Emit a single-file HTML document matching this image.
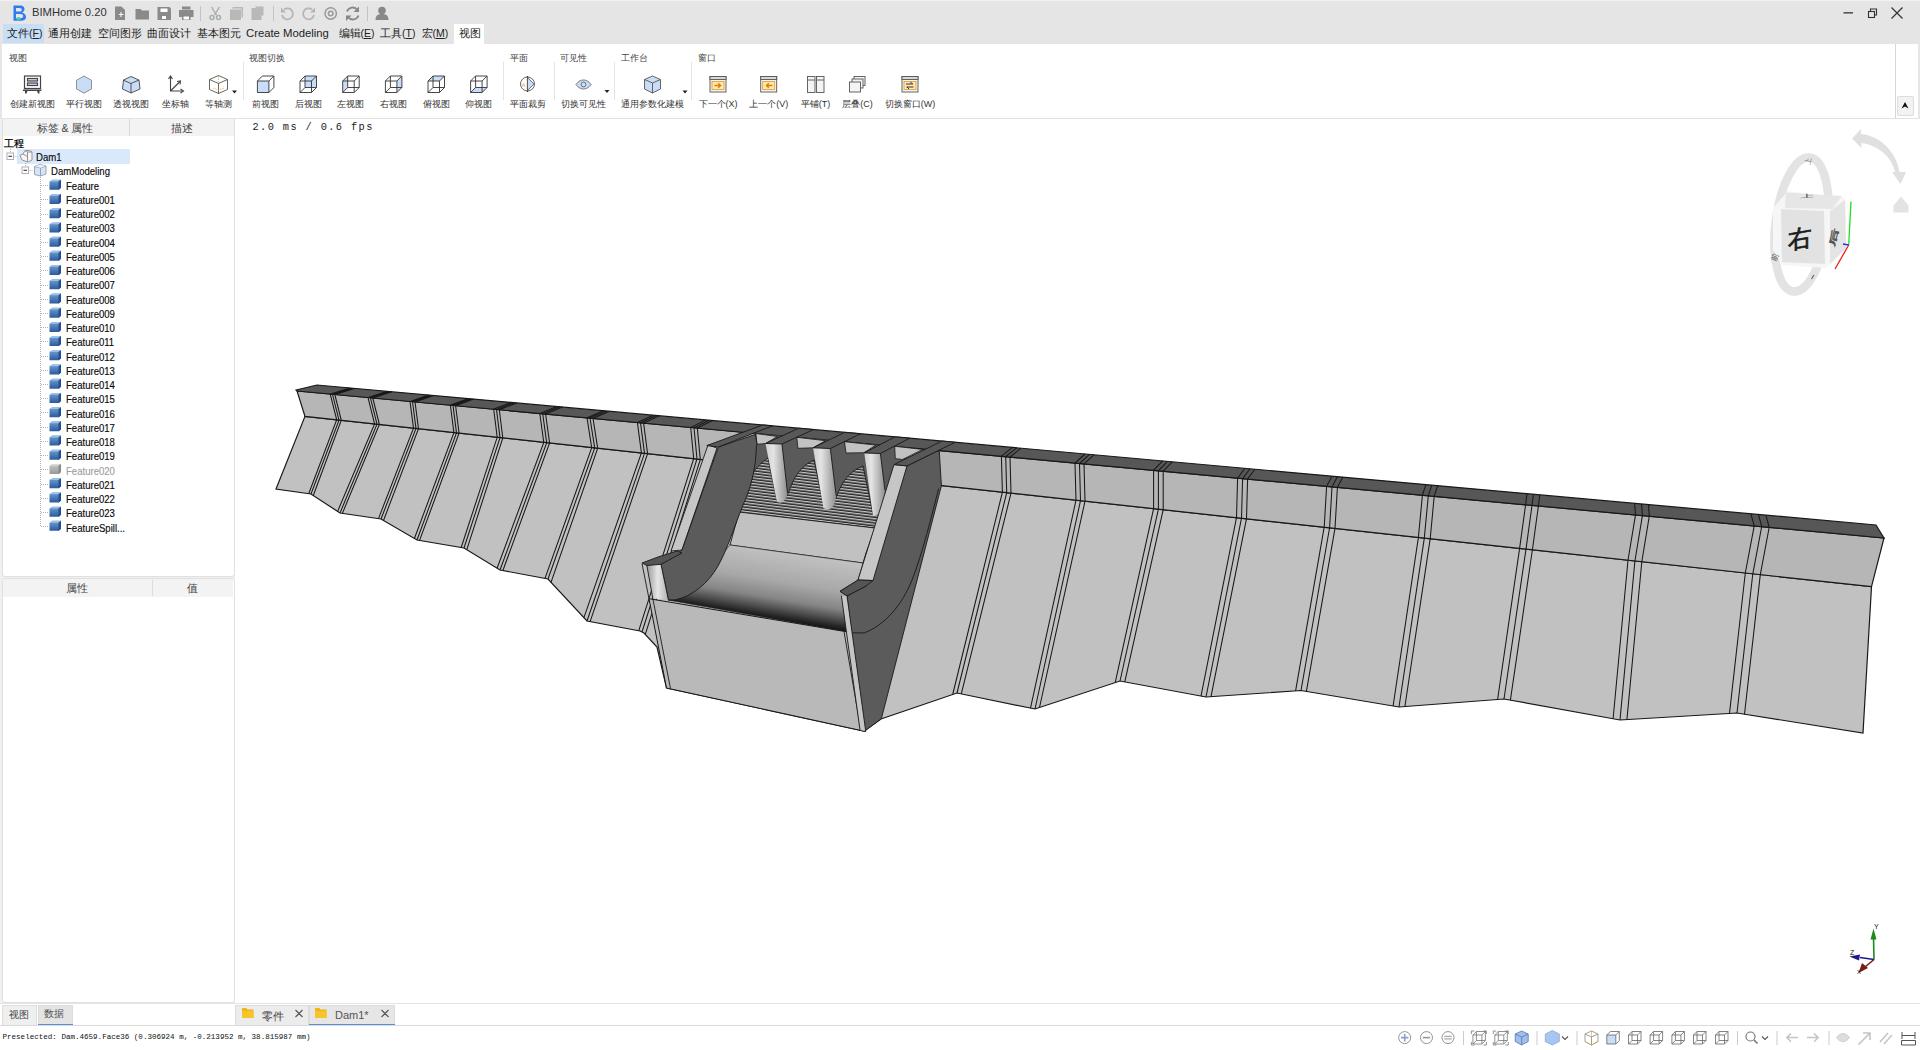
<!DOCTYPE html>
<html><head><meta charset="utf-8">
<style>
*{box-sizing:border-box;margin:0;padding:0}
html,body{width:1920px;height:1050px;overflow:hidden;background:#e6e6e6;font-family:"Liberation Sans",sans-serif;color:#222}
.a{position:absolute}
.t{position:absolute;white-space:nowrap;line-height:1}
#title{left:0;top:0;width:1920px;height:44px;background:#e5e5e5}
.menu{font-size:10.5px;top:28px;color:#222}
#ribbon{left:2px;top:44px;width:1916px;height:75px;background:#fff;border-bottom:1px solid #e2e2e2}
.gl{font-size:9px;color:#444;top:54px}
.bl{font-size:9px;color:#333;top:99.7px;transform:translateX(-50%)}
.sep{position:absolute;width:1px;background:#e4e4e4;top:62px;height:38px}
#left{left:0;top:119px;width:235px;height:885px;background:#f0f0f0}
.tree{font-size:9.5px;color:#0a0a0a;-webkit-text-stroke:0.15px currentColor}
.ft{font-size:10.4px;transform:scaleX(0.92);transform-origin:0 0}
.hdr{background:#f3f3f3;color:#444;font-size:10.5px}
#view{left:235px;top:119px;width:1685px;height:885px;background:#fff}
#bot{left:0;top:1003px;width:1920px;height:22px;background:#fff}
#status{left:0;top:1025px;width:1920px;height:25px;background:#fff;border-top:1px solid #dadada}
</style></head><body>
<div id="title" class="a">
<div class="a" style="left:0;top:0;width:1920px;height:1px;background:#f2f2f2"></div>
<svg class="a" style="left:11px;top:4px" width="17" height="18" viewBox="0 0 17 18"><path d="M2.5 1.5 H9 C12.5 1.5 13.5 3.5 13.5 5 C13.5 7 12.3 8 11 8.6 C13.5 9.2 15 11 15 13 C15 15.5 13 16.8 10 16.8 H2.5 Z M5 4 V7.6 H8.6 C10 7.6 10.8 6.8 10.8 5.8 C10.8 4.8 10 4 8.6 4 Z M5 10 V14.3 H9.5 C11.2 14.3 12.2 13.4 12.2 12.1 C12.2 10.8 11.2 10 9.5 10 Z" fill="#2f7cf0"/><ellipse cx="7.5" cy="14.5" rx="2.2" ry="1.6" fill="#3dd4b8"/></svg>
<div class="t" style="left:32px;top:7px;font-size:11.2px;color:#333">BIMHome 0.20</div>
<svg class="a" style="left:112px;top:5px" width="280" height="16" viewBox="0 0 280 16">
<g fill="#8a8a8a">
<path d="M3 1.5h6.5l3.5 3.5v10h-10z"/>
<path d="M23.5 4h5l1.5 1.5h7v9h-13.5z"/>
<path d="M45.5 2h12l1.5 1.5v11.5h-13.5z"/>
<path d="M67 5h14.5v7h-14.5z M70 1.5h8.5v3h-8.5z M70 10.5h8.5v4.5h-8.5z"/>
</g>
<g fill="#fff"><path d="M7.5 9h1v-2h1v2h2v1h-2v2h-1v-2h-2z"/><rect x="48.5" y="3.5" width="7" height="3.5"/><rect x="50" y="11" width="4" height="3"/><rect x="71.5" y="11.5" width="5.5" height="3"/></g>
<rect x="88" y="1" width="1" height="15" fill="#c4c4c4"/>
<g fill="none" stroke="#aaa" stroke-width="1.4"><path d="M99.5 2l5 8 M107.5 2l-5 8"/><circle cx="100" cy="12.5" r="2"/><circle cx="106.5" cy="12.5" r="2"/></g>
<g fill="#b8b8b8"><path d="M118 4.5h11v10.5h-11z M120.5 2h10.5v10.5h-1.5v-9h-9z"/><path d="M139.5 3h10v12h-10z M143 1.5h8.5v9h-1.5"/></g>
<rect x="161" y="1" width="1" height="15" fill="#c4c4c4"/>
<g id="undo"><path d="M172 4.5 A5.5 5.5 0 1 1 170 10" fill="none" stroke="#b5b5b5" stroke-width="1.8"/><path d="M169 2.5v5h5z" fill="#b5b5b5"/></g><use href="#undo" transform="matrix(-1 0 0 1 372 0)"/>
<circle cx="218.7" cy="8.5" r="5.7" fill="none" stroke="#999" stroke-width="1.5"/><circle cx="218.7" cy="8.5" r="2.3" fill="none" stroke="#999" stroke-width="1.5"/>
<g fill="none" stroke="#888" stroke-width="1.8"><path d="M235 6.5 A6 6 0 0 1 245.5 5"/><path d="M246.5 10.5 A6 6 0 0 1 236 12"/></g>
<path d="M247 1.5v5.5h-5.5z M234 16v-5.5h5.5z" fill="#888"/>
<rect x="255" y="1" width="1" height="15" fill="#c4c4c4"/>
<g fill="#888"><circle cx="270" cy="5.5" r="3.8"/><path d="M263.5 15c0-4.5 2.5-6 6.5-6s6.5 1.5 6.5 6z"/></g>
</svg>
<svg class="a" style="left:1840px;top:6px" width="66" height="14" viewBox="0 0 66 14">
<rect x="3.5" y="6.2" width="9.5" height="1.3" fill="#333"/>
<g fill="none" stroke="#333" stroke-width="1.1"><rect x="28.5" y="5.5" width="6" height="6"/><path d="M30.5 5.5v-2.5h6v6h-2"/></g>
<path d="M51.5 1.5l11 11 M62.5 1.5l-11 11" stroke="#333" stroke-width="1.2"/>
</svg>
<div class="a" style="left:3px;top:24px;width:41px;height:19px;background:#c7def5"></div>
<div class="a" style="left:454px;top:24px;width:30px;height:20px;background:#fff"></div>
<div class="t menu" style="left:7px">文件(<u>F</u>)</div>
<div class="t menu" style="left:48px">通用创建</div>
<div class="t menu" style="left:97.5px">空间图形</div>
<div class="t menu" style="left:147px">曲面设计</div>
<div class="t menu" style="left:196.5px">基本图元</div>
<div class="t menu" style="left:246px;font-size:11.3px;top:27.5px">Create Modeling</div>
<div class="t menu" style="left:338.5px">编辑(<u>E</u>)</div>
<div class="t menu" style="left:380px">工具(<u>T</u>)</div>
<div class="t menu" style="left:421.5px">宏(<u>M</u>)</div>
<div class="t menu" style="left:458.5px">视图</div>
</div>
<div id="ribbon" class="a"></div>
<div class="a" style="left:1895px;top:44px;width:1px;height:74px;background:#d6d6d6"></div>
<div class="a" style="left:1897px;top:96px;width:17px;height:20px;background:#f2f2f2;border:1px solid #ddd;border-radius:2px"></div>
<svg class="a" style="left:1900px;top:101px" width="10" height="9"><path d="M1.5 7.5L5 1l3.5 6.5L5 5.5z" fill="#111"/></svg>
<div class="t gl" style="left:9px">视图</div>
<div class="t gl" style="left:249px">视图切换</div>
<div class="t gl" style="left:509.5px">平面</div>
<div class="t gl" style="left:560px">可见性</div>
<div class="t gl" style="left:620.5px">工作台</div>
<div class="t gl" style="left:698px">窗口</div>
<div class="sep" style="left:242.5px"></div>
<div class="sep" style="left:503px"></div>
<div class="sep" style="left:553.5px"></div>
<div class="sep" style="left:613.5px"></div>
<div class="sep" style="left:691px"></div>
<div class="t bl" style="left:32.2px">创建新视图</div>
<div class="t bl" style="left:84px">平行视图</div>
<div class="t bl" style="left:131.2px">透视视图</div>
<div class="t bl" style="left:175.8px">坐标轴</div>
<div class="t bl" style="left:218.4px">等轴测</div>
<div class="t bl" style="left:265.4px">前视图</div>
<div class="t bl" style="left:308px">后视图</div>
<div class="t bl" style="left:350.7px">左视图</div>
<div class="t bl" style="left:393.4px">右视图</div>
<div class="t bl" style="left:436px">俯视图</div>
<div class="t bl" style="left:478.6px">仰视图</div>
<div class="t bl" style="left:527.7px">平面裁剪</div>
<div class="t bl" style="left:583.7px">切换可见性</div>
<div class="t bl" style="left:652px">通用参数化建模</div>
<div class="t bl" style="left:718px">下一个(X)</div>
<div class="t bl" style="left:768.7px">上一个(V)</div>
<div class="t bl" style="left:815.6px">平铺(T)</div>
<div class="t bl" style="left:857.5px">层叠(C)</div>
<div class="t bl" style="left:910px">切换窗口(W)</div>
<svg class="a" style="left:0;top:70px" width="960" height="28" viewBox="0 70 960 28"><g fill="none" stroke="#444" stroke-width="1.2"><rect x="24.5" y="76" width="16" height="12.5"/><rect x="27.5" y="78.5" width="10" height="2.5" fill="#c9dcf8"/><rect x="27.5" y="83" width="10" height="2.5" fill="#c9dcf8"/></g><path d="M23 89.5h18.5v1.5h-18.5z M25 91h2.5l-1 2.5h-1.5z M37 91h2.5l0 2.5h-1.5z" fill="#444"/><path d="M84 76l7.5 4.3v8.6L84 93.2l-7.5-4.3v-8.6z" fill="#c9dcf8" stroke="#777" stroke-width="0.8"/><path d="M131 76.5l8 3.5l1 9l-9 4l-8.5-4l1-9z" fill="#c9dcf8" stroke="#444" stroke-width="0.9"/><path d="M123 80l8 3.5l8-3.5 M131 83.5v9.5" fill="none" stroke="#444" stroke-width="0.9"/><path d="M170.5 77v14h12 M170.5 91l9.5-9.5" fill="none" stroke="#444" stroke-width="1.1"/><path d="M168.5 79l2-3 2 3 M180.5 89l3 2-3 2 M177 81.5l3.5-0.5-0.5 3.5" fill="none" stroke="#444" stroke-width="1.1"/><path d="M218.5 75.5l9 4v10l-9 4-9-4v-10z M209.5 79.5l9 4 9-4 M218.5 83.5v10" fill="none" stroke="#555" stroke-width="0.9"/><path d="M218.5 76v7 M213 88l5.5 2 5.5-2" fill="none" stroke="#e8a830" stroke-width="0.8" stroke-dasharray="1.5 1"/><path d="M232 90.5h5l-2.5 3z" fill="#222"/><path d="M257.4 81.0h11.5v11.5h-11.5z" fill="#c9dcf8"/><path d="M257.4 81.0h11.5v11.5h-11.5z M257.4 81.0L262.4 76.0h11.5L268.9 81.0 M268.9 92.5L273.9 87.5V76.0" fill="none" stroke="#333" stroke-width="0.9"/><path d="M305.0 76.0h11.5v11.5h-11.5z" fill="#c9dcf8"/><path d="M300.0 81.0h11.5v11.5h-11.5z M300.0 81.0L305.0 76.0h11.5L311.5 81.0 M311.5 92.5L316.5 87.5V76.0" fill="none" stroke="#333" stroke-width="0.9"/><path d="M305.0 76.0v11.5h11.5 M305.0 87.5L300.0 92.5" fill="none" stroke="#333" stroke-width="0.9"/><path d="M342.7 81.0L347.7 76.0v11.5L342.7 92.5z" fill="#c9dcf8"/><path d="M342.7 81.0h11.5v11.5h-11.5z M342.7 81.0L347.7 76.0h11.5L354.2 81.0 M354.2 92.5L359.2 87.5V76.0" fill="none" stroke="#333" stroke-width="0.9"/><path d="M347.7 76.0v11.5h11.5 M347.7 87.5L342.7 92.5" fill="none" stroke="#333" stroke-width="0.9"/><path d="M396.9 81.0L401.9 76.0v11.5L396.9 92.5z" fill="#c9dcf8"/><path d="M385.4 81.0h11.5v11.5h-11.5z M385.4 81.0L390.4 76.0h11.5L396.9 81.0 M396.9 92.5L401.9 87.5V76.0" fill="none" stroke="#333" stroke-width="0.9"/><path d="M390.4 76.0v11.5h11.5 M390.4 87.5L385.4 92.5" fill="none" stroke="#333" stroke-width="0.9"/><path d="M428.0 81.0L433.0 76.0h11.5L439.5 81.0z" fill="#c9dcf8"/><path d="M428.0 81.0h11.5v11.5h-11.5z M428.0 81.0L433.0 76.0h11.5L439.5 81.0 M439.5 92.5L444.5 87.5V76.0" fill="none" stroke="#333" stroke-width="0.9"/><path d="M433.0 76.0v11.5h11.5 M433.0 87.5L428.0 92.5" fill="none" stroke="#333" stroke-width="0.9"/><path d="M470.6 92.5L475.6 87.5h11.5L482.1 92.5z" fill="#c9dcf8"/><path d="M470.6 81.0h11.5v11.5h-11.5z M470.6 81.0L475.6 76.0h11.5L482.1 81.0 M482.1 92.5L487.1 87.5V76.0" fill="none" stroke="#333" stroke-width="0.9"/><path d="M475.6 76.0v11.5h11.5 M475.6 87.5L470.6 92.5" fill="none" stroke="#333" stroke-width="0.9"/><circle cx="527.5" cy="84" r="7" fill="none" stroke="#555" stroke-width="0.9"/><path d="M527.5 76v16" stroke="#333" stroke-width="1.2"/><path d="M527.5 77.5L534 84l-6.5 6.5z" fill="#c9dcf8" stroke="#555" stroke-width="0.8"/><text x="521.5" y="87" font-size="6" fill="#e8a830" font-family="Liberation Sans">A</text><path d="M576 84.5c2.5-3.5 5-4.5 7.5-4.5s5 1 7.5 4.5c-2.5 3.5-5 4.5-7.5 4.5s-5-1-7.5-4.5z" fill="#c9dcf8" stroke="#666" stroke-width="0.9"/><circle cx="583.5" cy="84.5" r="2.4" fill="none" stroke="#666" stroke-width="0.9"/><path d="M604.5 90h5l-2.5 3z" fill="#222"/><path d="M652.5 76l8 3.5v9.5l-8 4-8-4v-9.5z" fill="#c9dcf8" stroke="#555" stroke-width="0.9"/><path d="M644.5 79.5l8 3.5 8-3.5 M652.5 83v10" fill="none" stroke="#555" stroke-width="0.9"/><path d="M682.5 90.5h5l-2.5 3z" fill="#222"/><rect x="710" y="76.5" width="16" height="15.5" fill="#f4f4f4" stroke="#555" stroke-width="0.9"/><rect x="710" y="76.5" width="16" height="3" fill="#d8d8d8" stroke="#555" stroke-width="0.9"/><rect x="712" y="81.5" width="12" height="8" fill="#fde7b8" stroke="#e69a1a" stroke-width="0.8"/><path d="M714.5 85.5h6 M718.2 83.2l2.4 2.3-2.4 2.3" stroke="#d98200" stroke-width="1.4" fill="none"/><rect x="760.7" y="76.5" width="16" height="15.5" fill="#f4f4f4" stroke="#555" stroke-width="0.9"/><rect x="760.7" y="76.5" width="16" height="3" fill="#d8d8d8" stroke="#555" stroke-width="0.9"/><rect x="762.7" y="81.5" width="12" height="8" fill="#fde7b8" stroke="#e69a1a" stroke-width="0.8"/><path d="M772.5 85.5h-6 M768.8 83.2l-2.4 2.3 2.4 2.3" stroke="#d98200" stroke-width="1.4" fill="none"/><g fill="#f4f4f4" stroke="#555" stroke-width="0.9"><rect x="807.5" y="76.5" width="7.5" height="16"/><rect x="816.5" y="76.5" width="7.5" height="16"/></g><path d="M807.5 80h7.5 M816.5 80h7.5" stroke="#555" stroke-width="0.9"/><g fill="#f4f4f4" stroke="#555" stroke-width="0.9"><rect x="854" y="76.5" width="11" height="9"/><rect x="852" y="79" width="11" height="9"/><rect x="849.5" y="82" width="11" height="10"/></g><rect x="902" y="76.5" width="16" height="15.5" fill="#f4f4f4" stroke="#555" stroke-width="0.9"/><rect x="902" y="76.5" width="16" height="3" fill="#d8d8d8" stroke="#555" stroke-width="0.9"/><rect x="904" y="81.5" width="12" height="8" fill="#fde7b8" stroke="#e69a1a" stroke-width="0.8"/><path d="M906 84h7 M910.5 82l2 2 M913.5 87h-7 M909 89l-2-2" stroke="#333" stroke-width="1" fill="none"/></svg>
<div id="left" class="a">
<div class="a" style="left:1.5px;top:0px;width:233px;height:457.5px;background:#fff;border:1px solid #e0e0e0;border-top:none;border-radius:0 0 3px 3px"></div>
<div class="a hdr" style="left:2.5px;top:0px;width:231px;height:17px"></div>
<div class="a" style="left:129px;top:0px;width:1px;height:17px;background:#dcdcdc"></div>
<div class="t hdr" style="left:65px;top:4px;transform:translateX(-50%)">标签 &amp; 属性</div>
<div class="t hdr" style="left:181.5px;top:4px;transform:translateX(-50%)">描述</div>
<div class="t tree" style="left:4px;top:19.5px;font-size:9.5px;color:#000;-webkit-text-stroke:0.25px #000">工程</div>
<div class="a" style="left:17px;top:30px;width:112.5px;height:14.5px;background:#d9e8fb"></div>
</div>
<svg class="a" style="left:0;top:118px" width="235" height="420" viewBox="0 118 235 420"><g stroke="#b4b4b4" stroke-width="1" stroke-dasharray="1 1" fill="none"><path d="M10.5 147v5 M13.5 156.5h4 M25.5 163v4 M29.5 170.5h4 M40.5 175V526.5"/><path d="M41 185.5h7"/><path d="M41 199.5h7"/><path d="M41 214.5h7"/><path d="M41 228.5h7"/><path d="M41 242.5h7"/><path d="M41 256.5h7"/><path d="M41 270.5h7"/><path d="M41 285.5h7"/><path d="M41 299.5h7"/><path d="M41 313.5h7"/><path d="M41 327.5h7"/><path d="M41 341.5h7"/><path d="M41 356.5h7"/><path d="M41 370.5h7"/><path d="M41 384.5h7"/><path d="M41 398.5h7"/><path d="M41 412.5h7"/><path d="M41 427.5h7"/><path d="M41 441.5h7"/><path d="M41 455.5h7"/><path d="M41 469.5h7"/><path d="M41 484.5h7"/><path d="M41 498.5h7"/><path d="M41 512.5h7"/><path d="M41 526.5h7"/></g><rect x="7.0" y="153.0" width="6.5" height="6.5" fill="#fff" stroke="#b0b0b0" stroke-width="1"/><path d="M8.5 156.25h3.5" stroke="#222" stroke-width="1"/><rect x="22.0" y="167.0" width="6.5" height="6.5" fill="#fff" stroke="#b0b0b0" stroke-width="1"/><path d="M23.5 170.25h3.5" stroke="#222" stroke-width="1"/><path d="M20 155.5l3-1.5 2-3.5h4.5l2.5 1.5v8l-4 2-6-2z" fill="#f7f7f7" stroke="#8a8a8a" stroke-width="0.9"/><path d="M25 150.5l2.5 1.5h4.5 M27.5 152v9.5 M23 154l4.5 2.5" fill="none" stroke="#8a8a8a" stroke-width="0.9"/><path d="M34.5 166.5l5.5-2 6 1.5v8l-5.5 2-6-1.5z" fill="#d6e4f7" stroke="#8d9bb0" stroke-width="0.9"/><path d="M34.5 166.5l6 1.5 5.5-2 M40.5 168v8" fill="none" stroke="#8d9bb0" stroke-width="0.9"/><path d="M35 166.5l5-1.8 5.5 1.4-5 1.7z" fill="#eaf1fb"/><defs><linearGradient id="cf" x1="0" x2="0" y1="0" y2="1"><stop offset="0" stop-color="#6f9fd6"/><stop offset="1" stop-color="#2c5a9c"/></linearGradient><linearGradient id="cg" x1="0" x2="0" y1="0" y2="1"><stop offset="0" stop-color="#c8c8c8"/><stop offset="1" stop-color="#999"/></linearGradient></defs><path d="M49.5 181.6l3-1.8h8.5v8l-2 2h-9.5z" fill="url(#cf)"/><path d="M49.5 181.6l3-1.8h8.5l-2.5 1.8z" fill="#9cc0ea"/><path d="M58.5 181.6l2.5-1.8v8l-2.5 2z" fill="#234f8c"/><path d="M49.5 195.81l3-1.8h8.5v8l-2 2h-9.5z" fill="url(#cf)"/><path d="M49.5 195.81l3-1.8h8.5l-2.5 1.8z" fill="#9cc0ea"/><path d="M58.5 195.81l2.5-1.8v8l-2.5 2z" fill="#234f8c"/><path d="M49.5 210.01999999999998l3-1.8h8.5v8l-2 2h-9.5z" fill="url(#cf)"/><path d="M49.5 210.01999999999998l3-1.8h8.5l-2.5 1.8z" fill="#9cc0ea"/><path d="M58.5 210.01999999999998l2.5-1.8v8l-2.5 2z" fill="#234f8c"/><path d="M49.5 224.23l3-1.8h8.5v8l-2 2h-9.5z" fill="url(#cf)"/><path d="M49.5 224.23l3-1.8h8.5l-2.5 1.8z" fill="#9cc0ea"/><path d="M58.5 224.23l2.5-1.8v8l-2.5 2z" fill="#234f8c"/><path d="M49.5 238.44l3-1.8h8.5v8l-2 2h-9.5z" fill="url(#cf)"/><path d="M49.5 238.44l3-1.8h8.5l-2.5 1.8z" fill="#9cc0ea"/><path d="M58.5 238.44l2.5-1.8v8l-2.5 2z" fill="#234f8c"/><path d="M49.5 252.64999999999998l3-1.8h8.5v8l-2 2h-9.5z" fill="url(#cf)"/><path d="M49.5 252.64999999999998l3-1.8h8.5l-2.5 1.8z" fill="#9cc0ea"/><path d="M58.5 252.64999999999998l2.5-1.8v8l-2.5 2z" fill="#234f8c"/><path d="M49.5 266.86l3-1.8h8.5v8l-2 2h-9.5z" fill="url(#cf)"/><path d="M49.5 266.86l3-1.8h8.5l-2.5 1.8z" fill="#9cc0ea"/><path d="M58.5 266.86l2.5-1.8v8l-2.5 2z" fill="#234f8c"/><path d="M49.5 281.07l3-1.8h8.5v8l-2 2h-9.5z" fill="url(#cf)"/><path d="M49.5 281.07l3-1.8h8.5l-2.5 1.8z" fill="#9cc0ea"/><path d="M58.5 281.07l2.5-1.8v8l-2.5 2z" fill="#234f8c"/><path d="M49.5 295.28l3-1.8h8.5v8l-2 2h-9.5z" fill="url(#cf)"/><path d="M49.5 295.28l3-1.8h8.5l-2.5 1.8z" fill="#9cc0ea"/><path d="M58.5 295.28l2.5-1.8v8l-2.5 2z" fill="#234f8c"/><path d="M49.5 309.49l3-1.8h8.5v8l-2 2h-9.5z" fill="url(#cf)"/><path d="M49.5 309.49l3-1.8h8.5l-2.5 1.8z" fill="#9cc0ea"/><path d="M58.5 309.49l2.5-1.8v8l-2.5 2z" fill="#234f8c"/><path d="M49.5 323.70000000000005l3-1.8h8.5v8l-2 2h-9.5z" fill="url(#cf)"/><path d="M49.5 323.70000000000005l3-1.8h8.5l-2.5 1.8z" fill="#9cc0ea"/><path d="M58.5 323.70000000000005l2.5-1.8v8l-2.5 2z" fill="#234f8c"/><path d="M49.5 337.90999999999997l3-1.8h8.5v8l-2 2h-9.5z" fill="url(#cf)"/><path d="M49.5 337.90999999999997l3-1.8h8.5l-2.5 1.8z" fill="#9cc0ea"/><path d="M58.5 337.90999999999997l2.5-1.8v8l-2.5 2z" fill="#234f8c"/><path d="M49.5 352.12l3-1.8h8.5v8l-2 2h-9.5z" fill="url(#cf)"/><path d="M49.5 352.12l3-1.8h8.5l-2.5 1.8z" fill="#9cc0ea"/><path d="M58.5 352.12l2.5-1.8v8l-2.5 2z" fill="#234f8c"/><path d="M49.5 366.33000000000004l3-1.8h8.5v8l-2 2h-9.5z" fill="url(#cf)"/><path d="M49.5 366.33000000000004l3-1.8h8.5l-2.5 1.8z" fill="#9cc0ea"/><path d="M58.5 366.33000000000004l2.5-1.8v8l-2.5 2z" fill="#234f8c"/><path d="M49.5 380.53999999999996l3-1.8h8.5v8l-2 2h-9.5z" fill="url(#cf)"/><path d="M49.5 380.53999999999996l3-1.8h8.5l-2.5 1.8z" fill="#9cc0ea"/><path d="M58.5 380.53999999999996l2.5-1.8v8l-2.5 2z" fill="#234f8c"/><path d="M49.5 394.75l3-1.8h8.5v8l-2 2h-9.5z" fill="url(#cf)"/><path d="M49.5 394.75l3-1.8h8.5l-2.5 1.8z" fill="#9cc0ea"/><path d="M58.5 394.75l2.5-1.8v8l-2.5 2z" fill="#234f8c"/><path d="M49.5 408.96000000000004l3-1.8h8.5v8l-2 2h-9.5z" fill="url(#cf)"/><path d="M49.5 408.96000000000004l3-1.8h8.5l-2.5 1.8z" fill="#9cc0ea"/><path d="M58.5 408.96000000000004l2.5-1.8v8l-2.5 2z" fill="#234f8c"/><path d="M49.5 423.17l3-1.8h8.5v8l-2 2h-9.5z" fill="url(#cf)"/><path d="M49.5 423.17l3-1.8h8.5l-2.5 1.8z" fill="#9cc0ea"/><path d="M58.5 423.17l2.5-1.8v8l-2.5 2z" fill="#234f8c"/><path d="M49.5 437.38l3-1.8h8.5v8l-2 2h-9.5z" fill="url(#cf)"/><path d="M49.5 437.38l3-1.8h8.5l-2.5 1.8z" fill="#9cc0ea"/><path d="M58.5 437.38l2.5-1.8v8l-2.5 2z" fill="#234f8c"/><path d="M49.5 451.59000000000003l3-1.8h8.5v8l-2 2h-9.5z" fill="url(#cf)"/><path d="M49.5 451.59000000000003l3-1.8h8.5l-2.5 1.8z" fill="#9cc0ea"/><path d="M58.5 451.59000000000003l2.5-1.8v8l-2.5 2z" fill="#234f8c"/><path d="M49.5 465.80000000000007l3-1.8h8.5v8l-2 2h-9.5z" fill="url(#cg)"/><path d="M49.5 465.80000000000007l3-1.8h8.5l-2.5 1.8z" fill="#d8d8d8"/><path d="M58.5 465.80000000000007l2.5-1.8v8l-2.5 2z" fill="#8a8a8a"/><path d="M49.5 480.01l3-1.8h8.5v8l-2 2h-9.5z" fill="url(#cf)"/><path d="M49.5 480.01l3-1.8h8.5l-2.5 1.8z" fill="#9cc0ea"/><path d="M58.5 480.01l2.5-1.8v8l-2.5 2z" fill="#234f8c"/><path d="M49.5 494.22l3-1.8h8.5v8l-2 2h-9.5z" fill="url(#cf)"/><path d="M49.5 494.22l3-1.8h8.5l-2.5 1.8z" fill="#9cc0ea"/><path d="M58.5 494.22l2.5-1.8v8l-2.5 2z" fill="#234f8c"/><path d="M49.5 508.43000000000006l3-1.8h8.5v8l-2 2h-9.5z" fill="url(#cf)"/><path d="M49.5 508.43000000000006l3-1.8h8.5l-2.5 1.8z" fill="#9cc0ea"/><path d="M58.5 508.43000000000006l2.5-1.8v8l-2.5 2z" fill="#234f8c"/><path d="M49.5 522.64l3-1.8h8.5v8l-2 2h-9.5z" fill="url(#cf)"/><path d="M49.5 522.64l3-1.8h8.5l-2.5 1.8z" fill="#9cc0ea"/><path d="M58.5 522.64l2.5-1.8v8l-2.5 2z" fill="#234f8c"/></svg><div class="t tree ft" style="left:36px;top:153.3px">Dam1</div>
<div class="t tree ft" style="left:51px;top:167.4px">DamModeling</div>
<div class="t tree ft" style="left:66px;top:181.60px;color:#0a0a0a">Feature</div>
<div class="t tree ft" style="left:66px;top:195.85px;color:#0a0a0a">Feature001</div>
<div class="t tree ft" style="left:66px;top:210.10px;color:#0a0a0a">Feature002</div>
<div class="t tree ft" style="left:66px;top:224.35px;color:#0a0a0a">Feature003</div>
<div class="t tree ft" style="left:66px;top:238.60px;color:#0a0a0a">Feature004</div>
<div class="t tree ft" style="left:66px;top:252.85px;color:#0a0a0a">Feature005</div>
<div class="t tree ft" style="left:66px;top:267.10px;color:#0a0a0a">Feature006</div>
<div class="t tree ft" style="left:66px;top:281.35px;color:#0a0a0a">Feature007</div>
<div class="t tree ft" style="left:66px;top:295.60px;color:#0a0a0a">Feature008</div>
<div class="t tree ft" style="left:66px;top:309.85px;color:#0a0a0a">Feature009</div>
<div class="t tree ft" style="left:66px;top:324.10px;color:#0a0a0a">Feature010</div>
<div class="t tree ft" style="left:66px;top:338.35px;color:#0a0a0a">Feature011</div>
<div class="t tree ft" style="left:66px;top:352.60px;color:#0a0a0a">Feature012</div>
<div class="t tree ft" style="left:66px;top:366.85px;color:#0a0a0a">Feature013</div>
<div class="t tree ft" style="left:66px;top:381.10px;color:#0a0a0a">Feature014</div>
<div class="t tree ft" style="left:66px;top:395.35px;color:#0a0a0a">Feature015</div>
<div class="t tree ft" style="left:66px;top:409.60px;color:#0a0a0a">Feature016</div>
<div class="t tree ft" style="left:66px;top:423.85px;color:#0a0a0a">Feature017</div>
<div class="t tree ft" style="left:66px;top:438.10px;color:#0a0a0a">Feature018</div>
<div class="t tree ft" style="left:66px;top:452.35px;color:#0a0a0a">Feature019</div>
<div class="t tree ft" style="left:66px;top:466.60px;color:#a0a0a0">Feature020</div>
<div class="t tree ft" style="left:66px;top:480.85px;color:#0a0a0a">Feature021</div>
<div class="t tree ft" style="left:66px;top:495.10px;color:#0a0a0a">Feature022</div>
<div class="t tree ft" style="left:66px;top:509.35px;color:#0a0a0a">Feature023</div>
<div class="t tree ft" style="left:66px;top:523.60px;color:#0a0a0a">FeatureSpill...</div>
<div class="a" style="left:1.5px;top:578px;width:233px;height:425px;background:#fff;border:1px solid #e0e0e0;border-radius:3px"></div>
<div class="a hdr" style="left:2.5px;top:579px;width:230.5px;height:17.5px"></div>
<div class="a" style="left:152px;top:580px;width:1px;height:16px;background:#dcdcdc"></div>
<div class="t hdr" style="left:77px;top:583px;transform:translateX(-50%)">属性</div>
<div class="t hdr" style="left:192.5px;top:583px;transform:translateX(-50%)">值</div>

<div id="view" class="a"></div>
<!--DAM-->
<svg class="a" style="left:0;top:0" width="1920" height="1050" viewBox="0 0 1920 1050">
<polygon points="305.0,416.4 1871.5,586.7 1863.0,733.0 1863.0,733.0 1737.0,713.0 1620.0,720.0 1504.0,699.0 1399.0,707.0 1301.0,690.5 1206.0,697.0 1120.0,681.0 1035.0,709.0 957.0,693.0 881.0,719.0 864.0,731.0 666.5,688.0 657.0,647.0 644.0,633.0 640.0,631.0 587.0,621.0 548.0,579.0 500.0,570.0 464.0,548.0 417.0,540.0 381.0,519.0 340.0,513.0 311.0,494.0 276.0,489.0" fill="#c1c1c1" stroke="#181818" stroke-width="1.2"/>
<polygon points="297.0,391.0 1884.0,538.0 1871.5,586.7 305.0,416.4" fill="#b6b6b6" stroke="#181818" stroke-width="1.2"/>
<polygon points="296.0,390.0 317.0,385.0 1876.0,525.0 1884.0,538.0 297.0,391.0" fill="#575757" stroke="#181818" stroke-width="1.2"/>
<path d="M349.9 388.0L330.2 394.1L336.7 419.8L308.7 493.7 M352.2 388.2L332.5 394.3L339.0 420.1L311.0 494.0 M354.5 388.4L334.8 394.5L341.3 420.3L313.3 495.5 M387.2 391.3L368.0 397.6L374.6 424.0L337.6 511.4 M389.6 391.5L370.4 397.8L377.0 424.2L340.0 513.0 M392.0 391.7L372.8 398.0L379.4 424.5L342.4 513.3 M428.6 395.0L410.0 401.5L413.5 428.2L378.5 518.6 M431.1 395.3L412.5 401.7L416.0 428.5L381.0 519.0 M433.7 395.5L415.0 401.9L418.5 428.7L383.5 520.5 M468.5 398.6L450.4 405.2L453.9 432.6L414.4 538.5 M471.1 398.8L453.0 405.4L456.5 432.9L417.0 540.0 M473.7 399.1L455.6 405.7L459.1 433.2L419.6 540.4 M511.3 402.4L493.7 409.2L497.2 437.3L461.2 547.5 M514.1 402.7L496.5 409.5L500.0 437.6L464.0 548.0 M516.8 402.9L499.3 409.7L502.8 437.9L466.8 549.7 M556.8 406.5L539.8 413.5L543.8 442.4L497.1 568.2 M559.7 406.8L542.7 413.8L546.7 442.7L500.0 570.0 M562.5 407.0L545.6 414.0L549.6 443.0L502.9 570.5 M603.3 410.7L587.0 417.9L591.7 447.6L545.0 578.4 M606.4 411.0L590.0 418.1L594.7 447.9L548.0 579.0 M609.4 411.3L593.0 418.4L597.7 448.2L551.0 582.3 M653.1 415.2L637.4 422.5L641.4 453.0L583.9 617.6 M656.2 415.5L640.5 422.8L644.5 453.3L587.0 621.0 M659.3 415.7L643.6 423.1L647.6 453.6L590.1 621.6 M705.7 419.9L690.7 427.5L693.7 458.7L638.7 630.8 M709.0 420.2L694.0 427.8L697.0 459.0L642.0 632.0 M712.3 420.5L697.3 428.1L700.3 459.4L645.3 634.4 M1012.4 447.4L1001.4 456.2L1002.4 492.2L952.7 694.5 M1016.7 447.8L1005.7 456.6L1006.7 492.7L957.0 693.0 M1021.0 448.2L1010.0 457.0L1011.0 493.1L961.3 693.9 M1085.0 454.0L1075.0 463.0L1076.0 500.2L1030.5 708.1 M1089.5 454.4L1079.5 463.5L1080.5 500.7L1035.0 709.0 M1094.0 454.8L1084.0 463.9L1085.0 501.2L1039.5 707.5 M1162.7 460.9L1153.6 470.3L1153.6 508.6L1115.2 682.6 M1167.4 461.4L1158.4 470.8L1158.4 509.2L1120.0 681.0 M1172.2 461.8L1163.2 471.2L1163.2 509.7L1124.8 681.9 M1244.9 468.3L1237.6 478.1L1236.5 517.7L1201.0 696.1 M1249.9 468.8L1242.6 478.6L1241.5 518.2L1206.0 697.0 M1254.9 469.2L1247.6 479.0L1246.5 518.7L1211.0 696.7 M1332.0 476.2L1326.6 486.3L1324.2 527.2L1295.6 690.9 M1337.5 476.6L1332.0 486.8L1329.6 527.8L1301.0 690.5 M1342.9 477.1L1337.4 487.3L1335.0 528.4L1306.4 691.4 M1425.9 484.6L1422.4 495.2L1418.4 537.4L1393.1 706.0 M1431.8 485.1L1428.3 495.8L1424.3 538.1L1399.0 707.0 M1437.7 485.6L1434.2 496.3L1430.2 538.7L1404.9 706.5 M1527.0 493.7L1525.6 504.8L1519.6 548.4L1497.6 699.5 M1533.4 494.2L1532.0 505.4L1526.0 549.1L1504.0 699.0 M1539.8 494.8L1538.4 506.0L1532.4 549.8L1510.4 700.2 M1634.6 503.3L1635.5 514.9L1628.0 560.2L1613.1 718.7 M1641.6 503.9L1642.4 515.6L1634.9 561.0L1620.0 720.0 M1648.5 504.6L1649.3 516.2L1641.8 561.7L1626.9 719.6 M1750.9 513.8L1754.2 525.9L1745.3 573.0L1729.5 713.4 M1758.4 514.4L1761.7 526.6L1752.8 573.8L1737.0 713.0 M1765.9 515.1L1769.2 527.3L1760.3 574.6L1744.5 714.2" fill="none" stroke="#181818" stroke-width="1.05"/>
<defs><linearGradient id="bk" gradientUnits="userSpaceOnUse" x1="770" y1="548" x2="758.5" y2="617"><stop offset="0" stop-color="#c2c2c2"/><stop offset="0.45" stop-color="#a8a8a8"/><stop offset="0.7" stop-color="#858585"/><stop offset="0.85" stop-color="#4c4c4c"/><stop offset="0.95" stop-color="#242424"/><stop offset="1" stop-color="#151515"/></linearGradient><linearGradient id="pr" x1="0" y1="0" x2="1" y2="0"><stop offset="0" stop-color="#d0d0d0"/><stop offset="0.35" stop-color="#e4e4e4"/><stop offset="1" stop-color="#8e8e8e"/></linearGradient><linearGradient id="wg" x1="0" y1="0" x2="1" y2="0"><stop offset="0" stop-color="#9a9a9a"/><stop offset="0.5" stop-color="#e6e6e6"/><stop offset="1" stop-color="#b0b0b0"/></linearGradient><pattern id="st" width="4" height="2.85" patternUnits="userSpaceOnUse" patternTransform="rotate(7)"><rect width="4" height="2.85" fill="#c6c6c6"/><rect y="1.35" width="4" height="1.5" fill="#262626"/></pattern></defs>
<polygon points="754.0,433.3 906.0,447.4 907.0,465.9 863.0,563.0 730.0,545.0 743.0,505.0 756.4,440.0" fill="#5a5a5a"/>
<polygon points="755.8,433.5 777.5,436.5 765.5,443.5 757.0,444.3" fill="#c2c2c2" stroke="#181818" stroke-width="0.8"/>
<polygon points="796.8,437.3 825.6,440.7 813.0,447.8 797.9,448.3" fill="#c2c2c2" stroke="#181818" stroke-width="0.8"/>
<polygon points="844.5,441.7 876.0,445.1 863.9,452.7 846.0,453.0" fill="#c2c2c2" stroke="#181818" stroke-width="0.8"/>
<polygon points="894.7,446.3 922.5,449.4 902.7,459.4 895.3,458.7" fill="#c2c2c2" stroke="#181818" stroke-width="0.8"/>
<path d="M737 513 C742 490 752 468 768 458 L777 501 L788 494 C794 476 801 466 814 460 L824 507 L836 498 C842 481 850 471 863 466 L873 514 L885 491 L886 515 L875 528 Z" fill="url(#st)" stroke="#181818" stroke-width="0.8"/>
<polygon points="739.0,512.0 875.0,528.0 866.0,553.0 863.0,563.0 730.0,545.0" fill="#c1c1c1" stroke="#181818" stroke-width="0.9"/>
<path d="M765.5 443.5L782 444L787.5 493Q785.5 503.6 779.4 502.6Q775.7 501 776.7 501Z" fill="url(#pr)"/>
<path d="M782 444L787.5 493" stroke="#181818" stroke-width="0.9"/>
<path d="M813 447.8L830.3 448.5L836.2 495.8Q834.2 510.4 826.8 509.4Q822.4 508 823.4 508Z" fill="url(#pr)"/>
<path d="M830.3 448.5L836.2 495.8" stroke="#181818" stroke-width="0.9"/>
<path d="M864.3 452.9L880.4 453.5L885 490.4Q883 516.5 874 515.5Q871.8 514.8 872.8 514.8Z" fill="url(#pr)"/>
<path d="M880.4 453.5L885 490.4" stroke="#181818" stroke-width="0.9"/>
<polygon points="765.5,443.5 782.0,444.0 813.4,429.6 798.7,428.3" fill="#585858" stroke="#181818" stroke-width="0.9"/>
<polygon points="813.0,447.8 830.3,448.5 860.4,433.8 844.5,432.4" fill="#585858" stroke="#181818" stroke-width="0.9"/>
<polygon points="864.3,452.9 880.4,453.5 909.6,438.2 894.9,436.9" fill="#585858" stroke="#181818" stroke-width="0.9"/>
<polygon points="730.0,545.0 863.0,563.0 858.0,580.0 840.0,591.0 847.0,596.0 851.0,631.5 848.0,632.0 668.0,600.0 674.3,599.8 681.7,595.3 709.7,571.7 727.4,548.0" fill="url(#bk)" stroke="#181818" stroke-width="0.6"/>
<polygon points="649.0,598.7 848.0,632.0 865.7,731.5 666.5,688.0" fill="#b9b9b9" stroke="#181818" stroke-width="1"/>
<path d="M652.8 598.5L670.5 688.5 M844 631.5L861 731" stroke="#181818" stroke-width="0.9" fill="none"/>
<polygon points="708.0,445.0 717.0,448.0 682.0,550.0 671.0,551.0" fill="#c6c6c6" stroke="#181818" stroke-width="0.9"/>
<path d="M718.3 447 L755.5 434.4 L757 444.3 L756.4 446 C756 470 750 490 743 505 C735 525 728 548 718 566 C708 584 692 596 675.7 599.8 L668.4 599.8 L661 564.3 L682 550 Z" fill="#5b5b5b" stroke="#181818" stroke-width="0.9"/>
<polygon points="706.8,445.6 762.7,425.0 772.3,425.9 718.3,447.0" fill="#585858" stroke="#181818" stroke-width="0.9"/>
<polygon points="647.0,565.0 661.0,564.3 668.4,599.8 652.8,598.5" fill="url(#wg)"/>
<path d="M642 563.6L649 598.7 M646.7 564.5L652.8 598.5 M661 564.3L668.4 599.8" stroke="#181818" stroke-width="0.9" fill="none"/>
<polygon points="642.0,563.0 658.0,557.0 677.0,551.0 682.0,553.0 661.0,564.3 647.0,565.5" fill="#555" stroke="#181818" stroke-width="0.9"/>
<polygon points="866.0,586.0 907.0,465.9 937.4,451.0 939.3,451.6 941.4,485.7 881.4,718.6 864.3,731.4 851.4,631.4 847.0,596.0" fill="#5b5b5b" stroke="#181818" stroke-width="0.9"/>
<path d="M848.6 632.9 L864.3 632.9 C885 625 902 605 912 580 C922 555 932 515 938.6 488.6" fill="none" stroke="#181818" stroke-width="0.9"/>
<polygon points="858.0,580.0 894.0,464.6 907.0,465.9 873.0,580.5" fill="#c6c6c6" stroke="#181818" stroke-width="0.9"/>
<polygon points="894.0,464.6 941.9,441.1 955.1,442.3 907.0,465.9" fill="#585858" stroke="#181818" stroke-width="0.9"/>
<polygon points="840.0,591.4 858.0,580.0 873.0,580.5 866.0,586.0 847.0,596.0" fill="#555" stroke="#181818" stroke-width="0.9"/>
<polygon points="841.4,595.7 847,596 865.7,731 860,730" fill="#c6c6c6"/>
<path d="M841.4 595.7L860 730 M847 596L865.7 731" stroke="#181818" stroke-width="0.9" fill="none"/>
<text x="252.5" y="129.8" font-family="Liberation Mono" font-size="10.3" letter-spacing="1.4" fill="#222">2.0 ms / 0.6 fps</text>
<path d="M1861 134 C1880 136 1896 151 1899.5 172 L1906 172 L1900.5 184 L1892 172 L1895 172 C1891.5 156 1877 145 1861.5 143 L1861.5 148 L1852 138.5 L1861 129 Z" fill="#e0e0e0"/>
<path d="M1893.5 205.5 L1901 196.5 L1908.5 205.5 L1908.5 212.5 L1893.5 212.5 Z" fill="#e3e3e3"/>
<ellipse cx="1801.5" cy="224.5" rx="26" ry="67.5" transform="rotate(7 1801.5 224.5)" fill="none" stroke="#e3e3e3" stroke-width="8.5"/>
<path d="M1773 208 L1788 191 L1845 198 L1846 250 L1826 268 L1782 265 L1773 250 Z" fill="#f6f6f6"/>
<path d="M1786 192.5 L1842 196 L1832 209 L1785 208 Z" fill="#e6e6e6"/>
<path d="M1781 209 L1824 211 L1825 264 L1782 262 Z" fill="#e2e2e2"/>
<path d="M1830 211 L1845 200 L1846 248 L1830 264 Z" fill="#e4e4e4"/>
<text x="0" y="0" font-size="24" fill="#1a1a1a" stroke="#1a1a1a" stroke-width="0.7" font-family="Liberation Sans" transform="translate(1788 249) rotate(-10) skewX(-10) scale(1,1)">右</text>
<text x="0" y="0" font-size="13" fill="#555" stroke="#555" stroke-width="0.8" font-family="Liberation Sans" transform="translate(1834 247) rotate(-75) scale(1.4,0.6)">后</text>
<text x="0" y="0" font-size="9" fill="#444" font-family="Liberation Sans" transform="translate(1800 198) rotate(-5) scale(1.6,0.5)">上</text>
<text x="0" y="0" font-size="8" fill="#555" font-family="Liberation Sans" transform="translate(1776 262) rotate(-70)">前</text>
<text x="0" y="0" font-size="7" fill="#666" font-family="Liberation Sans" transform="translate(1810 165) rotate(-80)">上</text>
<path d="M1814 275 l-2.5 4" stroke="#666" stroke-width="1.2"/>
<path d="M1848.7 245 L1851 201.5" stroke="#1ee01e" stroke-width="1.3"/><path d="M1848.7 245 L1835 269" stroke="#e82020" stroke-width="1.3"/><path d="M1848.7 245 L1843 244" stroke="#2030e0" stroke-width="1.3"/>
<path d="M1874 959.5 L1873.5 937" stroke="#1f8a1f" stroke-width="1.6"/><path d="M1870.5 939.5 L1873.5 928.5 L1876.5 939.5 Z" fill="#1f8a1f"/>
<path d="M1874 959.5 L1860 957.5" stroke="#1a1a8a" stroke-width="1.3"/><path d="M1860 954.5 L1849.5 956.5 L1859 960.5 Z" fill="#1a1a8a"/>
<path d="M1874 959.5 L1865 967" stroke="#7a1a1a" stroke-width="1.6"/><path d="M1862 963 L1858.5 973 L1868 968 Z" fill="#7a1a1a"/>
<text x="1874" y="929" font-size="7" fill="#111" font-family="Liberation Sans">Y</text><text x="1850" y="955" font-size="7" fill="#111" font-family="Liberation Sans">Z</text><text x="1857" y="974" font-size="6" fill="#111" font-family="Liberation Sans">X</text>
</svg>
<!--/DAM-->
<div id="bot" class="a">
<div class="a" style="left:0;top:0;width:1920px;height:1px;background:#e4e4e4"></div>
<div class="a" style="left:2px;top:1.5px;width:35px;height:21px;background:#efefef;border:1px solid #dedede;border-bottom:none"></div>
<div class="a" style="left:37.5px;top:1.5px;width:35px;height:21px;background:#e4e4e4;border:1px solid #dedede;border-bottom:none"></div>
<div class="a" style="left:37.5px;top:20.5px;width:35px;height:1.5px;background:#5a8ed8"></div>
<div class="t" style="left:9px;top:7px;font-size:10px;color:#444">视图</div>
<div class="t" style="left:44px;top:6px;font-size:10px;color:#555">数据</div>
<div class="a" style="left:235px;top:1.5px;width:73.5px;height:21px;background:#ececec;border:1px solid #dcdcdc;border-bottom:none"></div>
<div class="a" style="left:308.5px;top:1.5px;width:86px;height:21px;background:#e6e6e6;border:1px solid #dcdcdc;border-bottom:none"></div>
<div class="a" style="left:309px;top:20.5px;width:85.5px;height:1.5px;background:#5a8ed8"></div>
<svg class="a" style="left:240px;top:3px" width="160" height="16" viewBox="240 1006 160 16">
<path d="M242 1008h4.5l1 1.5h6v8.5h-11.5z" fill="#f0b41c"/><path d="M242 1011h11.5v7h-11.5z" fill="#f7c42c"/>
<path d="M315 1008h4.5l1 1.5h6v8.5h-11.5z" fill="#f0b41c"/><path d="M315 1011h11.5v7h-11.5z" fill="#f7c42c"/>
<path d="M295.5 1010l7 7 M302.5 1010l-7 7 M381.5 1010l7 7 M388.5 1010l-7 7" stroke="#555" stroke-width="1.1"/>
</svg>
<div class="t" style="left:261.5px;top:7.5px;font-size:10.5px;color:#444">零件</div>
<div class="t" style="left:335px;top:6.5px;font-size:11px;color:#555">Dam1*</div>
</div>
<div id="status" class="a">
<div class="t" style="left:2.5px;top:8px;font-family:'Liberation Mono',monospace;font-size:7.55px;color:#111">Preselected: Dam.4659.Face36 (0.306924 m, -0.213952 m, 38.815987 mm)</div>
<svg class="a" style="left:1390px;top:1px" width="530" height="22" viewBox="1390 1026 530 22">
<g fill="none" stroke="#888" stroke-width="0.9">
<circle cx="1404.7" cy="1036.6" r="6"/><circle cx="1426.5" cy="1036.6" r="6"/><circle cx="1448" cy="1036.6" r="6"/>
</g>
<path d="M1401 1036.6h7.4 M1404.7 1033v7.4" stroke="#8aa0c8" stroke-width="1.6"/><path d="M1422.8 1036.6h7.4" stroke="#999" stroke-width="1.6"/><path d="M1444.3 1035.3h7.4 M1444.3 1037.9h7.4" stroke="#aaa" stroke-width="1.2"/>
<g fill="#ccc"><rect x="1463" y="1030" width="1" height="14"/><rect x="1536.5" y="1030" width="1" height="14"/><rect x="1576.5" y="1030" width="1" height="14"/><rect x="1737" y="1030" width="1" height="14"/><rect x="1776.5" y="1030" width="1" height="14"/><rect x="1828.5" y="1030" width="1" height="14"/></g>
<path d="M1472.9 1034.0h9v9h-9z M1472.9 1034.0L1476.4 1030.5h9L1481.9 1034.0 M1481.9 1043.0L1485.4 1039.5V1030.5" fill="none" stroke="#777" stroke-width="0.8"/><path d="M1476.4 1030.5v9h9 M1476.4 1039.5L1472.9 1043.0" fill="none" stroke="#777" stroke-width="0.8"/><path d="M1471.4 1033v-3h3 M1483.4 1030h3v3 M1471.4 1041v3h3 M1483.4 1044h3v-3" fill="none" stroke="#777" stroke-width="0.8"/><path d="M1494.8 1034.0h9v9h-9z M1494.8 1034.0L1498.3 1030.5h9L1503.8 1034.0 M1503.8 1043.0L1507.3 1039.5V1030.5" fill="none" stroke="#777" stroke-width="0.8"/><path d="M1498.3 1030.5v9h9 M1498.3 1039.5L1494.8 1043.0" fill="none" stroke="#777" stroke-width="0.8"/><path d="M1493.3 1033v-3h3 M1505.3 1030h3v3 M1493.3 1041v3h3 M1505.3 1044h3v-3" fill="none" stroke="#777" stroke-width="0.8"/><path d="M1521.7 1030l6.5 3v7.5l-6.5 3.5-6.5-3.5v-7.5z" fill="#9fc0ef" stroke="#5577aa" stroke-width="0.8"/><path d="M1515.2 1033l6.5 3 6.5-3 M1521.7 1036v8" fill="none" stroke="#5577aa" stroke-width="0.8"/><path d="M1552.3 1029.5l7 3.5v7.5l-7 3.5-7-3.5v-7.5z" fill="#a8c6f2" stroke="#8aa6d0" stroke-width="0.8"/><path d="M1562 1035.5l3 3 3-3" fill="none" stroke="#555" stroke-width="1.1"/><path d="M1591.5 1030l6.5 3v7.5l-6.5 3.5-6.5-3.5v-7.5z M1585 1033l6.5 3 6.5-3 M1591.5 1036v8" fill="none" stroke="#888" stroke-width="0.8"/><path d="M1585 1040.5l6.5 3.5 6.5-3.5 M1591.5 1030v6" fill="none" stroke="#e8a830" stroke-width="0.7"/><path d="M1606.8 1034.0h9v9h-9z" fill="#c9dcf8"/><path d="M1606.8 1034.0h9v9h-9z M1606.8 1034.0L1610.3 1030.5h9L1615.8 1034.0 M1615.8 1043.0L1619.3 1039.5V1030.5" fill="none" stroke="#666" stroke-width="0.8"/><path d="M1628.5 1034.0h9v9h-9z M1628.5 1034.0L1632.0 1030.5h9L1637.5 1034.0 M1637.5 1043.0L1641.0 1039.5V1030.5" fill="none" stroke="#666" stroke-width="0.8"/><path d="M1632.0 1030.5v9h9 M1632.0 1039.5L1628.5 1043.0" fill="none" stroke="#666" stroke-width="0.8"/><path d="M1650.1 1034.0h9v9h-9z M1650.1 1034.0L1653.6 1030.5h9L1659.1 1034.0 M1659.1 1043.0L1662.6 1039.5V1030.5" fill="none" stroke="#666" stroke-width="0.8"/><path d="M1653.6 1030.5v9h9 M1653.6 1039.5L1650.1 1043.0" fill="none" stroke="#666" stroke-width="0.8"/><path d="M1671.9 1034.0h9v9h-9z M1671.9 1034.0L1675.4 1030.5h9L1680.9 1034.0 M1680.9 1043.0L1684.4 1039.5V1030.5" fill="none" stroke="#666" stroke-width="0.8"/><path d="M1675.4 1030.5v9h9 M1675.4 1039.5L1671.9 1043.0" fill="none" stroke="#666" stroke-width="0.8"/><path d="M1693.5 1034.0h9v9h-9z M1693.5 1034.0L1697.0 1030.5h9L1702.5 1034.0 M1702.5 1043.0L1706.0 1039.5V1030.5" fill="none" stroke="#666" stroke-width="0.8"/><path d="M1697.0 1030.5v9h9 M1697.0 1039.5L1693.5 1043.0" fill="none" stroke="#666" stroke-width="0.8"/><path d="M1715.5 1034.0h9v9h-9z M1715.5 1034.0L1719.0 1030.5h9L1724.5 1034.0 M1724.5 1043.0L1728.0 1039.5V1030.5" fill="none" stroke="#666" stroke-width="0.8"/><path d="M1719.0 1030.5v9h9 M1719.0 1039.5L1715.5 1043.0" fill="none" stroke="#666" stroke-width="0.8"/><circle cx="1750.5" cy="1035.5" r="4.5" fill="none" stroke="#777" stroke-width="1.2"/><path d="M1754 1039l3.5 3.5" stroke="#777" stroke-width="1.6"/><path d="M1762 1035.5l3 3 3-3" fill="none" stroke="#555" stroke-width="1.1"/><path d="M1798 1036.6h-11 M1791 1032.5l-4.2 4.1 4.2 4.1 M1807 1036.6h11 M1814 1032.5l4.2 4.1-4.2 4.1" fill="none" stroke="#c4c4c4" stroke-width="1.5"/><path d="M1836.5 1036.6c2-3 4.5-4 6.5-4s4.5 1 6.5 4c-2 3-4.5 4-6.5 4s-4.5-1-6.5-4z" fill="#ddd" stroke="#c8c8c8" stroke-width="0.8"/><path d="M1858.5 1043.5l11-11 M1863 1032h7v7" fill="none" stroke="#c4c4c4" stroke-width="1.6"/><path d="M1880 1041l8-9 M1884 1043l8-9" fill="none" stroke="#c4c4c4" stroke-width="1.5"/><path d="M1902 1031v7 M1915 1031v7 M1902 1034.5h13 M1901.5 1039.5h14v4.5h-14z" fill="none" stroke="#555" stroke-width="1"/></svg>
</div>
</body></html>
